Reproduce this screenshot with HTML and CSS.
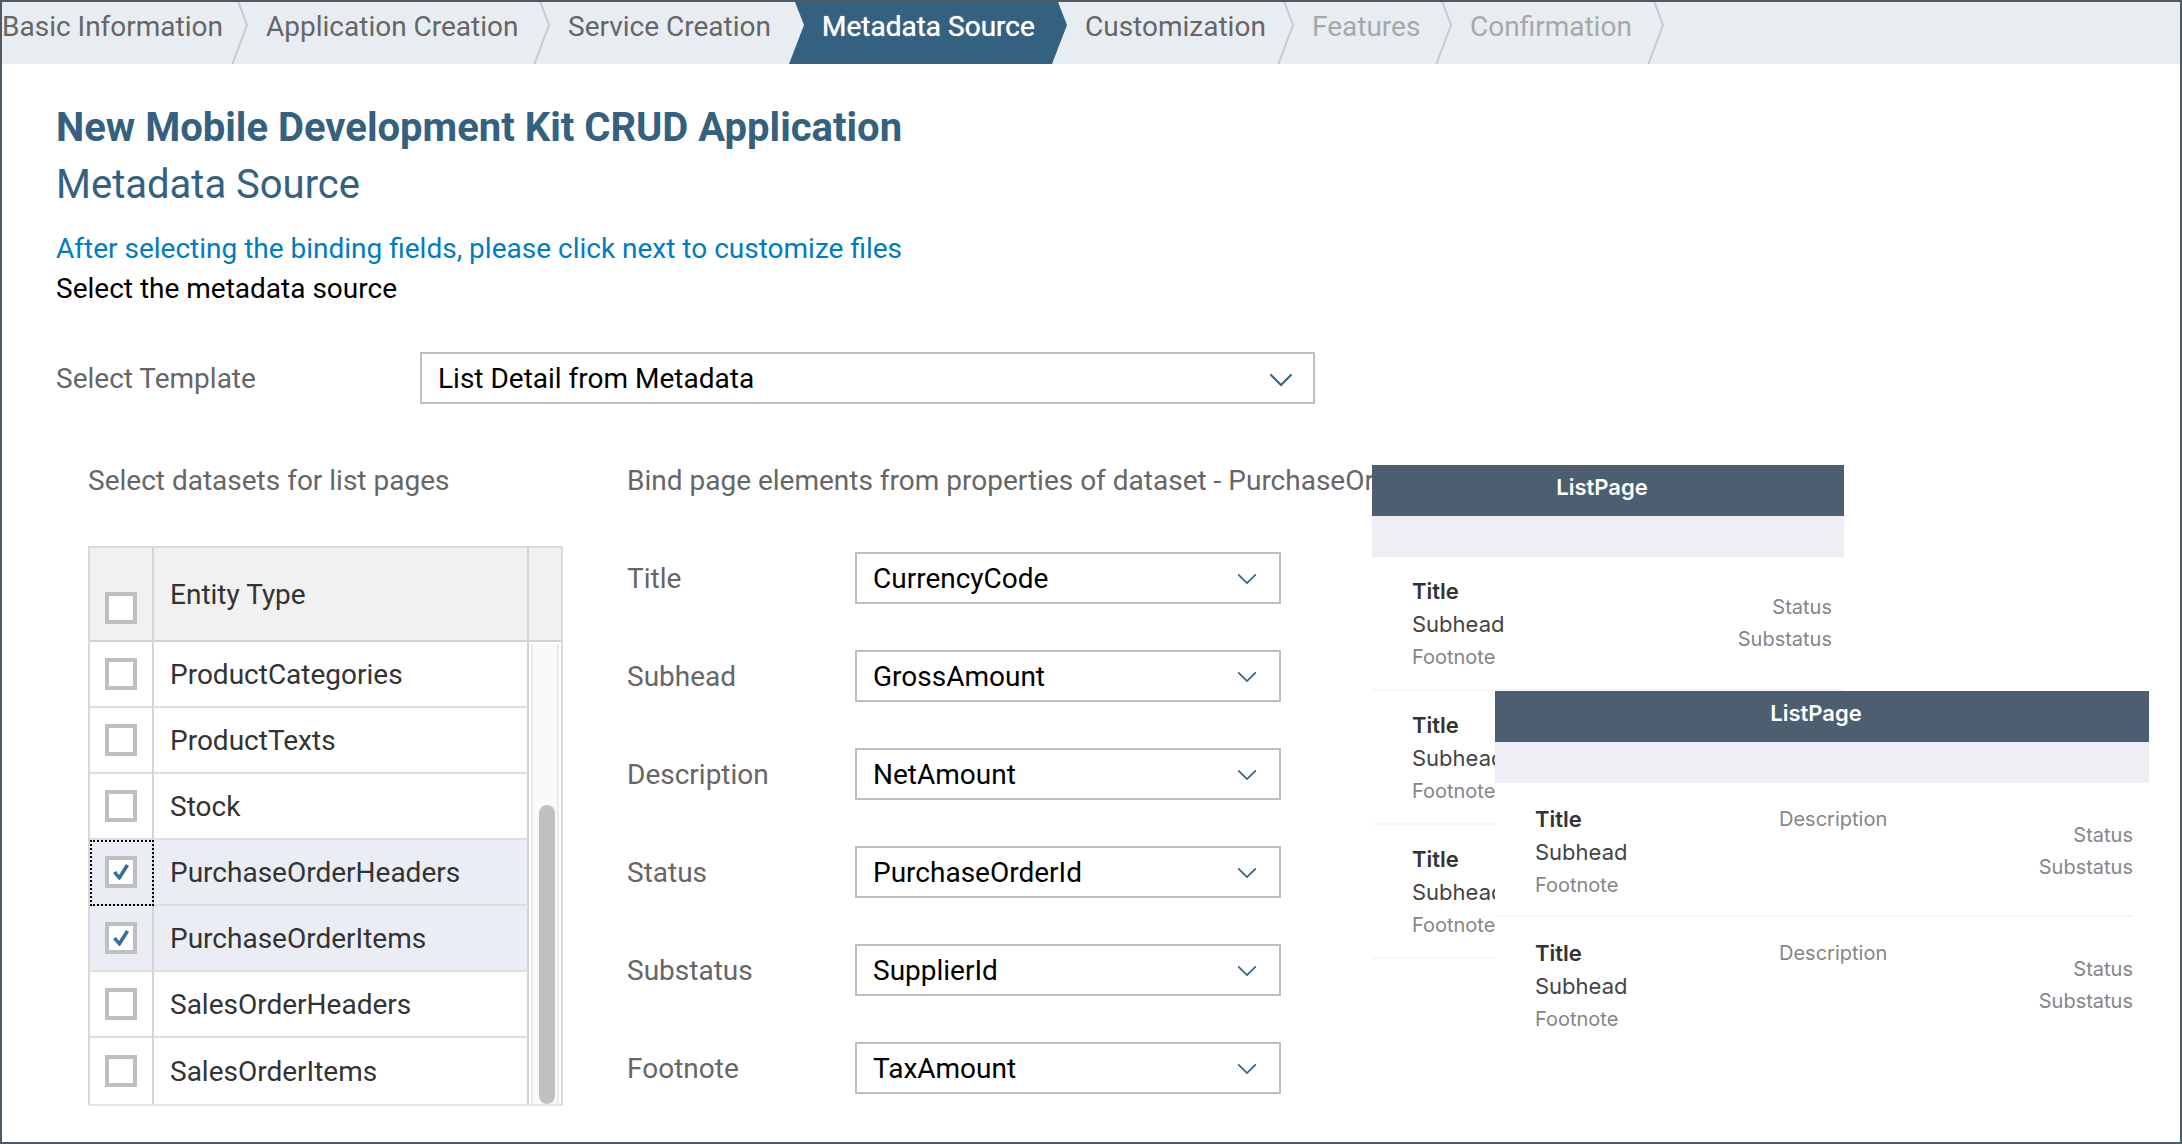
FILE: index.html
```html
<!DOCTYPE html>
<html lang="en">
<head>
<meta charset="utf-8">
<title>New Mobile Development Kit CRUD Application</title>
<link rel="stylesheet" href="styles.css">
</head>
<body>
<nav aria-label="Wizard steps">
  <ol class="steps">
    <li class="step step-first"><button type="button">Basic Information</button><svg class="sep" viewBox="0 0 16 62"><path d="M6 -1L15 23L0 63"/></svg></li>
    <li class="step"><button type="button">Application Creation</button><svg class="sep" viewBox="0 0 16 62"><path d="M6 -1L15 23L0 63"/></svg></li>
    <li class="step"><button type="button">Service Creation</button></li>
    <li class="step step-active"><button type="button" aria-current="step">Metadata Source</button></li>
    <li class="step"><button type="button">Customization</button><svg class="sep" viewBox="0 0 16 62"><path d="M6 -1L15 23L0 63"/></svg></li>
    <li class="step"><button type="button" disabled>Features</button><svg class="sep" viewBox="0 0 16 62"><path d="M6 -1L15 23L0 63"/></svg></li>
    <li class="step"><button type="button" disabled>Confirmation</button><svg class="sep" viewBox="0 0 16 62"><path d="M6 -1L15 23L0 63"/></svg></li>
  </ol>
</nav>
<main>
  <header class="intro">
    <h1>New Mobile Development Kit CRUD Application</h1>
    <h2>Metadata Source</h2>
    <p class="hint">After selecting the binding fields, please click next to customize files</p>
    <p>Select the metadata source</p>
  </header>

  <div class="template-row">
    <label for="template">Select Template</label>
    <div class="dropdown dropdown-large">
      <select id="template"><option>List Detail from Metadata</option></select>
      <svg viewBox="0 0 24 14"><path d="M2 2L12 12L22 2"/></svg>
    </div>
  </div>

  <div class="columns">
    <section class="datasets">
      <h3>Select datasets for list pages</h3>
      <table>
        <thead>
          <tr><th class="tick"><input type="checkbox" aria-label="Select all"></th><th class="name">Entity Type</th><th class="gutter"></th></tr>
        </thead>
        <tbody>
          <tr><td class="tick"><input type="checkbox" id="e1"></td><td class="name"><label for="e1">ProductCategories</label></td><td class="gutter" rowspan="7"><div class="track"><div class="thumb"></div></div></td></tr>
          <tr><td class="tick"><input type="checkbox" id="e2"></td><td class="name"><label for="e2">ProductTexts</label></td></tr>
          <tr><td class="tick"><input type="checkbox" id="e3"></td><td class="name"><label for="e3">Stock</label></td></tr>
          <tr class="selected"><td class="tick focused"><input type="checkbox" id="e4" checked></td><td class="name"><label for="e4">PurchaseOrderHeaders</label></td></tr>
          <tr class="selected"><td class="tick"><input type="checkbox" id="e5" checked></td><td class="name"><label for="e5">PurchaseOrderItems</label></td></tr>
          <tr><td class="tick"><input type="checkbox" id="e6"></td><td class="name"><label for="e6">SalesOrderHeaders</label></td></tr>
          <tr><td class="tick"><input type="checkbox" id="e7"></td><td class="name"><label for="e7">SalesOrderItems</label></td></tr>
        </tbody>
      </table>
    </section>

    <section class="bindings">
      <h3>Bind page elements from properties of dataset - PurchaseOrderHeaders</h3>
      <div class="fields">
        <label for="f1">Title</label>
        <div class="dropdown"><select id="f1"><option>CurrencyCode</option></select><svg viewBox="0 0 24 14"><path d="M2 2L12 12L22 2"/></svg></div>
        <label for="f2">Subhead</label>
        <div class="dropdown"><select id="f2"><option>GrossAmount</option></select><svg viewBox="0 0 24 14"><path d="M2 2L12 12L22 2"/></svg></div>
        <label for="f3">Description</label>
        <div class="dropdown"><select id="f3"><option>NetAmount</option></select><svg viewBox="0 0 24 14"><path d="M2 2L12 12L22 2"/></svg></div>
        <label for="f4">Status</label>
        <div class="dropdown"><select id="f4"><option>PurchaseOrderId</option></select><svg viewBox="0 0 24 14"><path d="M2 2L12 12L22 2"/></svg></div>
        <label for="f5">Substatus</label>
        <div class="dropdown"><select id="f5"><option>SupplierId</option></select><svg viewBox="0 0 24 14"><path d="M2 2L12 12L22 2"/></svg></div>
        <label for="f6">Footnote</label>
        <div class="dropdown"><select id="f6"><option>TaxAmount</option></select><svg viewBox="0 0 24 14"><path d="M2 2L12 12L22 2"/></svg></div>
      </div>
    </section>

    <aside class="previews">
      <article class="preview preview-phone">
        <h4>ListPage</h4>
        <ul>
          <li><div class="left"><b>Title</b><span>Subhead</span><small>Footnote</small></div><div class="right"><small>Status</small><small>Substatus</small></div></li>
          <li><div class="left"><b>Title</b><span>Subhead</span><small>Footnote</small></div></li>
          <li><div class="left"><b>Title</b><span>Subhead</span><small>Footnote</small></div></li>
        </ul>
      </article>
      <article class="preview preview-tablet">
        <h4>ListPage</h4>
        <ul>
          <li><div class="left"><b>Title</b><span>Subhead</span><small>Footnote</small></div><small class="middle">Description</small><div class="right"><small>Status</small><small>Substatus</small></div></li>
          <li><div class="left"><b>Title</b><span>Subhead</span><small>Footnote</small></div><small class="middle">Description</small><div class="right"><small>Status</small><small>Substatus</small></div></li>
        </ul>
      </article>
    </aside>
  </div>
</main>
</body>
</html>
```
FILE: styles.css
```css
* { box-sizing: border-box; }

body {
  margin: 0;
  min-height: 100vh;
  border: 2px solid #4d5b66;
  overflow-x: hidden;
  background: #fff;
  color: #000;
  font: 28px/40px Roboto, "Liberation Sans", sans-serif;
}

h1, h2, h3, h4, p, ol, ul { margin: 0; padding: 0; font-weight: 400; }
ol, ul { list-style: none; }
button, select { font: inherit; }

/* wizard steps */
.steps {
  display: grid;
  grid-template-columns: 246px 302px 254px 263px 227px 158px 212px;
  height: 62px;
  overflow: hidden;
  background: #e8edf1;
}
.step { position: relative; isolation: isolate; }
.step button {
  width: 100%;
  padding: 5px 0 0 18px;
  border: 0;
  background: none;
  color: #666;
  line-height: 40px;
  text-align: left;
  white-space: nowrap;
}
.step button:disabled { color: #a5a9ac; }
.step-first button { padding-left: 0; }
.sep {
  position: absolute;
  top: 0;
  right: 0;
  width: 16px;
  height: 62px;
  fill: none;
  stroke: #c5ccd3;
  stroke-width: 2;
}
.step-active button { color: #fff; text-shadow: 0 0 1px #fff; }
.step-active::before {
  content: "";
  position: absolute;
  inset: 0 0 0 -15px;
  z-index: -1;
  background: #346180;
  clip-path: polygon(6px 0, 15px 23px, 0 100%, calc(100% - 15px) 100%, 100% 23px, calc(100% - 9px) 0);
}

main { padding: 36px 31px 36px 54px; }

.intro h1 { color: #346180; font-size: 40px; font-weight: 700; line-height: 56px; }
.intro h2 { color: #346180; font-size: 40px; line-height: 58px; }
.intro p { line-height: 40px; }
.intro .hint { margin-top: 15px; color: #007cc0; }

label, h3 { color: #666; font-size: 28px; }

.template-row {
  display: flex;
  align-items: center;
  margin-top: 43px;
}
.template-row label { width: 364px; padding-top: 2px; }

.dropdown { position: relative; }
.dropdown select {
  display: block;
  width: 100%;
  height: 52px;
  padding: 2px 48px 0 16px;
  border: 2px solid #bfbfbf;
  border-radius: 0;
  background: #fff;
  color: #000;
  appearance: none;
}
.dropdown svg {
  position: absolute;
  top: 21px;
  right: 24px;
  width: 20px;
  height: 12px;
  fill: none;
  stroke: #346180;
  stroke-width: 2;
  stroke-linecap: round;
  pointer-events: none;
}
.dropdown-large { width: 895px; }
.dropdown-large svg { right: 22px; width: 24px; height: 14px; }

.columns {
  display: grid;
  grid-template-columns: 475px 654px minmax(0, 1fr);
  align-items: start;
  margin-top: 56px;
  padding-left: 32px;
}
.bindings { margin-left: 64px; margin-right: -64px; }
h3 { padding-top: 1px; line-height: 40px; white-space: nowrap; }

/* dataset table */
table {
  width: 475px;
  margin-top: 45px;
  border: 2px solid #d9d9d9;
  border-bottom-color: #e5e5e5;
  border-spacing: 0;
  table-layout: fixed;
}
th, td {
  height: 66px;
  padding: 0;
  border-right: 2px solid #d4d4d4;
  border-bottom: 2px solid #dedede;
  text-align: left;
  font-weight: 400;
}
th { height: 94px; border-bottom-color: #d4d4d4; background: #f1f1f1; color: #333; }
tbody tr:last-child td, tbody .gutter { border-bottom: 0; }
.tick { width: 64px; padding-left: 15px; }
th.tick { padding-top: 28px; }
.name { padding: 2px 0 0 16px; }
.name label { color: #333; }
.gutter { width: 32px; border-right: 0; }
td.gutter { padding: 2px 2px 0; }
.selected td { background: #eaeef4; }
.focused { outline: 2px dotted #000; outline-offset: -2px; }

input[type="checkbox"] {
  display: grid;
  place-items: center;
  width: 32px;
  height: 32px;
  margin: 0;
  border: 4px solid #bfbfbf;
  background: #fff;
  appearance: none;
}
input[type="checkbox"]:checked::before {
  content: "";
  width: 16px;
  height: 16px;
  background: #346f9c;
  clip-path: polygon(0 9px, 3px 7px, 6px 11px, 13px 0, 16px 2px, 7px 16px, 6px 16px);
}

.track {
  display: flex;
  flex-direction: column;
  justify-content: flex-end;
  height: 460px;
  padding: 0 4px 0 6px;
  border-left: 2px solid #ebebeb;
  border-right: 2px solid #ebebeb;
  background: #fafafa;
}
.thumb { width: 16px; height: 299px; border-radius: 8px; background: #c1c1c1; }

/* binding form */
.fields {
  display: grid;
  grid-template-columns: 228px 426px;
  align-items: center;
  row-gap: 46px;
  margin-top: 51px;
}
.fields label { padding-top: 2px; }

/* page previews */
.previews { position: relative; margin: 5px 0 0 155px; font-family: Inter, sans-serif; }
.preview { background: #fff; }
.preview-phone { position: relative; width: 472px; }
.preview-tablet { position: absolute; top: 226px; left: 123px; right: 0; }
.preview h4 {
  height: 92px;
  padding: 6px 12px 0 0;
  border-bottom: 41px solid #efeef4;
  background: #4d5e70;
  color: #fff;
  font-size: 22px;
  font-weight: 600;
  line-height: 32px;
  text-align: center;
}
.preview li {
  display: flex;
  justify-content: space-between;
  height: 134px;
  padding: 18px 12px 0 40px;
  border-bottom: 2px solid #f6f6f6;
}
.preview-tablet li { margin-right: 16px; padding-top: 20px; padding-right: 0; }
.preview-tablet li:last-child { border-bottom: 0; }
.left, .right { display: flex; flex-direction: column; }
.right { margin-top: 16px; text-align: right; }
.preview b { color: #333; font-size: 22px; font-weight: 600; line-height: 32px; }
.preview span { color: #444; font-size: 22px; line-height: 34px; }
.preview small { color: #85858a; font-size: 20px; line-height: 32px; }
```
